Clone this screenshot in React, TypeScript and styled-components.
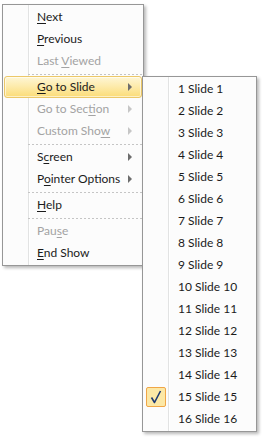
import React from 'react';
import styled, { createGlobalStyle, css } from 'styled-components';

const GlobalStyle = createGlobalStyle`
  html, body {
    margin: 0;
    padding: 0;
    background: #ffffff;
  }
  body {
    font-family: Lato, "Noto Sans", sans-serif;
    font-size: 12px;
  }
`;

const Page = styled.div`
  box-sizing: border-box;
  min-height: 439px;
  padding: 4px 0 0 2px;
`;

const Menu = styled.div<{ $width: number; $gutter: number }>`
  position: relative;
  box-sizing: border-box;
  width: ${(p) => p.$width}px;
  padding: 1px;
  border: 1px solid #979797;
  background-color: #fcfcfc;
  background-image: linear-gradient(
    to right,
    transparent ${(p) => p.$gutter}px,
    #e2e3e3 ${(p) => p.$gutter}px,
    #e2e3e3 ${(p) => p.$gutter + 1}px,
    #ffffff ${(p) => p.$gutter + 1}px,
    #ffffff ${(p) => p.$gutter + 2}px,
    transparent ${(p) => p.$gutter + 2}px
  );
  box-shadow: 2px 2px 3px rgba(0, 0, 0, 0.28);
`;

const SubMenu = styled(Menu)`
  position: absolute;
  left: 137px;
  top: -1px;
  z-index: 2;
`;

const Item = styled.div<{ $disabled?: boolean; $active?: boolean; $indent: number }>`
  position: relative;
  box-sizing: border-box;
  height: 22px;
  display: flex;
  align-items: center;
  padding-left: ${(p) => p.$indent}px;
  padding-right: 9px;
  border: 1px solid transparent;
  border-radius: 3px;
  color: ${(p) => (p.$disabled ? '#a3a3a3' : '#1b1b1b')};
  white-space: nowrap;
  ${(p) =>
    p.$active &&
    css`
      border-color: #ecc868;
      background: linear-gradient(to bottom, #fef6d6 0%, #fdeaa8 50%, #fbdc78 100%);
      box-shadow: inset 0 0 0 1px rgba(255, 255, 255, 0.55);
    `}
`;

const Label = styled.span`
  flex: 1;
  line-height: 14px;
`;

const Key = styled.span`
  text-decoration: underline;
  text-underline-offset: 2px;
`;

const Arrow = styled.span<{ $disabled?: boolean }>`
  width: 0;
  height: 0;
  border-top: 4px solid transparent;
  border-bottom: 4px solid transparent;
  border-left: 4px solid ${(p) => (p.$disabled ? '#c6c6c6' : '#6d6d6d')};
`;

const Separator = styled.div`
  height: 4px;
  margin-left: 24px;
  display: flex;
  align-items: center;

  &::after {
    content: '';
    flex: 1;
    height: 1px;
    background: repeating-linear-gradient(to right, #c5c5c5 0 2px, transparent 2px 4px);
  }
`;

const Check = styled.span`
  position: absolute;
  left: 1px;
  top: 0;
  box-sizing: border-box;
  width: 20px;
  height: 20px;
  display: flex;
  align-items: center;
  justify-content: center;
  border: 1px solid #f0a647;
  border-radius: 2px;
  background: #fce8a6;

  svg {
    width: 12px;
    height: 14px;
  }
`;

type Entry =
  | { sep: true }
  | { sep?: false; pre: string; key: string; post: string; disabled?: boolean; sub?: boolean; active?: boolean };

const entries: Entry[] = [
  { pre: '', key: 'N', post: 'ext' },
  { pre: '', key: 'P', post: 'revious' },
  { pre: 'Last ', key: 'V', post: 'iewed', disabled: true },
  { sep: true },
  { pre: '', key: 'G', post: 'o to Slide', sub: true, active: true },
  { pre: 'Go to Sec', key: 't', post: 'ion', sub: true, disabled: true },
  { pre: 'Custom Sho', key: 'w', post: '', sub: true, disabled: true },
  { sep: true },
  { pre: 'S', key: 'c', post: 'reen', sub: true },
  { pre: 'P', key: 'o', post: 'inter Options', sub: true },
  { sep: true },
  { pre: '', key: 'H', post: 'elp' },
  { sep: true },
  { pre: 'Pau', key: 's', post: 'e', disabled: true },
  { pre: '', key: 'E', post: 'nd Show' },
];

const slides = Array.from({ length: 16 }, (_, i) => i + 1);

function SlideMenu() {
  return (
    <SubMenu $width={115} $gutter={25}>
      {slides.map((n) => (
        <Item key={n} $indent={33}>
          {n === 15 && (
            <Check>
              <svg viewBox="0 0 12 14">
                <path d="M1.5 7.5 L4.5 12.5 L10.5 1" fill="none" stroke="#1d3a73" strokeWidth="1.6" strokeLinejoin="round" />
              </svg>
            </Check>
          )}
          <Label>
            {n} Slide {n}
          </Label>
        </Item>
      ))}
    </SubMenu>
  );
}

export default function App() {
  return (
    <Page>
      <GlobalStyle />
      <Menu $width={142} $gutter={25}>
        {entries.map((e, i) =>
          e.sep ? (
            <Separator key={i} />
          ) : (
            <Item key={i} $indent={32} $disabled={e.disabled} $active={e.active}>
              <Label>
                {e.pre}
                <Key>{e.key}</Key>
                {e.post}
              </Label>
              {e.sub && <Arrow $disabled={e.disabled} />}
              {e.active && <SlideMenu />}
            </Item>
          )
        )}
      </Menu>
    </Page>
  );
}
